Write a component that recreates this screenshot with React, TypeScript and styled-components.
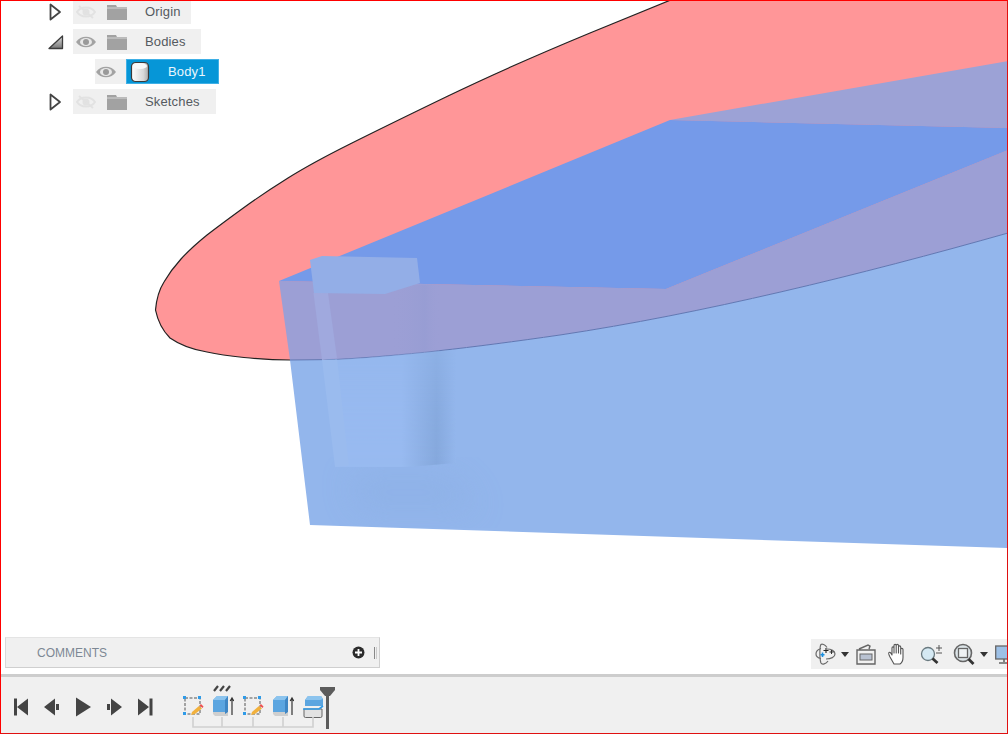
import React from "react";
import styled, { createGlobalStyle } from "styled-components";

const Global = createGlobalStyle`
  html, body { margin: 0; padding: 0; background: #fff; }
  body { font-family: "Liberation Sans", Arial, sans-serif; overflow: hidden; }
`;

const Frame = styled.div`
  width: 1008px; height: 734px; box-sizing: border-box;
  border: 1px solid #f00; border-bottom-color: #e01010; border-right-color: #e01010;
  display: flex; flex-direction: column; overflow: hidden; background: #fff;
`;
const Canvas = styled.div`position: relative; flex: 1; min-height: 0;`;
const Scene = styled.svg`position: absolute; left: -1px; top: -1px; width: 1008px; height: 734px;`;

const Browser = styled.div`
  position: absolute; left: 46px; top: -2px;
  display: flex; flex-direction: column; gap: 5px;
`;
const Row = styled.div<{ $indent?: number }>`
  display: flex; align-items: center; height: 25px;
  margin-left: ${p => p.$indent ?? 0}px;
`;
const Expander = styled.svg`width: 18px; height: 18px; margin-right: 8px; flex: none;`;
const Pill = styled.div<{ $w: number }>`
  width: ${p => p.$w}px; height: 25px; background: #f0f0f0;
  display: flex; align-items: center; padding-left: 2px; box-sizing: border-box;
`;
const EyeBox = styled.svg`width: 22px; height: 16px; margin-right: 9px; flex: none;`;
const FolderIcon = styled.svg`width: 22px; height: 16px; margin-right: 17px; flex: none;`;
const Label = styled.span`font-size: 13px; color: #555a60; letter-spacing: .15px;`;
const EyeCell = styled.div`
  width: 31px; height: 25px; background: #f0f0f0; display: flex; align-items: center; justify-content: center;
`;
const Selected = styled.div`
  width: 93px; height: 25px; background: #0696d7; border: 1px solid #3fb0e6; display: flex; align-items: center; box-sizing: border-box; padding-left: 3px;
`;
const BodyIcon = styled.svg`width: 20px; height: 22px; margin-right: 18px; flex: none;`;
const SelectedLabel = styled.span`font-size: 13px; color: #eaf6fd; letter-spacing: .15px;`;

const BottomBars = styled.div`
  position: absolute; left: 4px; right: 0; bottom: 6px;
  display: flex; justify-content: space-between; align-items: flex-end;
`;
const Comments = styled.div`
  width: 375px; height: 31px; box-sizing: border-box; background: #f0f0f0;
  border: 1px solid #cfcfcf; border-top-color: #e4e4e4; border-left-color: #d8d8d8;
  display: flex; align-items: center; padding-left: 31px; padding-right: 2px;
`;
const CommentsLabel = styled.span`flex: 1; font-size: 12px; color: #7d8894;`;
const AddDot = styled.svg`width: 13px; height: 13px; margin-right: 9px;`;
const Grip = styled.div`width: 3px; height: 12px; border-left: 1px solid #888; border-right: 1px solid #ccc; box-sizing: border-box;`;

const NavBar = styled.div`
  width: 196px; height: 30px; background: #f0f0f0; margin-bottom: -1px;
  display: flex; align-items: center; padding-left: 4px; box-sizing: border-box; overflow: hidden;
`;
const NavIcon = styled.svg<{ $w: number; $mr: number }>`
  width: ${p => p.$w}px; height: 24px; margin-right: ${p => p.$mr}px; flex: none;
`;

const Timeline = styled.div`
  height: 59px; flex: none; box-sizing: border-box; background: #f0f0f0;
  border-top: 3px solid #cdcdcd;
  display: flex; align-items: flex-start;
`;
const Transport = styled.div`
  display: flex; gap: 11px; padding: 20px 0 0 10px; width: 181px; box-sizing: border-box; flex: none;
`;
const TransportIcon = styled.svg`width: 20px; height: 20px; flex: none; fill: #444;`;
const Features = styled.div`
  position: relative; display: flex; gap: 8px; padding-top: 7px; height: 55px; box-sizing: border-box;
`;
const Feature = styled.svg`width: 22px; height: 34px; flex: none;`;
const Bracket = styled.svg`position: absolute; left: 1px; top: 40px; width: 142px; height: 12px;`;
const Marker = styled.svg`width: 17px; height: 42px; margin: 10px 0 0 -5px; flex: none;`;

const Eye = ({ off }: { off?: boolean }) => (
  <EyeBox viewBox="0 0 22 16">
    {off ? (
      <g stroke="#e2e2e2" fill="none" strokeWidth="2">
        <path d="M2 8c4-6 14-6 18 0c-4 6-14 6-18 0z" />
        <circle cx="11" cy="8" r="2.500" fill="#e2e2e2" />
        <path d="M4 2l14 12" stroke="#e2e2e2" />
      </g>
    ) : (
      <g>
        <path d="M1 8c4.500-7 15.500-7 20 0c-4.500 7-15.500 7-20 0z" fill="#a3a3a3" />
        <ellipse cx="11" cy="8" rx="6" ry="4" fill="#e8e8e8" />
        <circle cx="11" cy="8" r="3" fill="#9a9a9a" />
      </g>
    )}
  </EyeBox>
);
const Folder = () => (
  <FolderIcon viewBox="0 0 22 16">
    <path d="M1 1h9l1 2h10v13H1z" fill="#a2a2a2" />
    <path d="M1 4h20" stroke="#d5d5d5" strokeWidth="1" />
  </FolderIcon>
);
const Closed = () => (
  <Expander viewBox="0 0 18 18">
    <path d="M3.500 1.500v15l9.500-7.500z" fill="#fff" stroke="#444" strokeWidth="1.800" strokeLinejoin="round" />
  </Expander>
);
const Open = () => (
  <Expander viewBox="0 0 18 18">
    <defs><linearGradient id="op" x1="0" y1="0" x2="0" y2="1"><stop offset="0" stopColor="#ddd" /><stop offset="1" stopColor="#777" /></linearGradient></defs>
    <path d="M2 15.500L15.500 3v12.500z" fill="url(#op)" stroke="#3d3d3d" strokeWidth="1.300" strokeLinejoin="round" />
  </Expander>
);

const SketchFeature = () => (
  <Feature viewBox="0 0 22 34">
    <g transform="translate(0 4)">
      <rect x="3" y="10" width="15" height="16" fill="none" stroke="#555" strokeWidth="1" strokeDasharray="3 1.500" />
      <rect x="1" y="8" width="3" height="3" fill="#2f9be8" /><rect x="16" y="8" width="3" height="3" fill="#2f9be8" />
      <rect x="1" y="24" width="3" height="3" fill="#2f9be8" />
      <path d="M10 24l7-6 3 2.500-7 5.500-4 1z" fill="#f2b13d" /><path d="M17.500 17.500l3 2.500 1-1.500-2.500-2.500z" fill="#ef4f4f" />
    </g>
  </Feature>
);
const ExtrudeFeature = ({ ticks }: { ticks?: boolean }) => (
  <Feature viewBox="0 0 22 34">
    {ticks && <path d="M2 7l4-5M8 7l4-5M14 7l4-5" stroke="#444" strokeWidth="2.200" />}
    <g transform="translate(0 4)">
      <path d="M1 24h15v4H3l-2-2z" fill="#cfcfcf" />
      <path d="M1 12l4-4h11v16H1z" fill="#5ba5e0" />
      <path d="M1 12l4-4h11l-3 4z" fill="#8cc4ee" />
      <path d="M13 12l3-4v16l-3 2z" fill="#3f86c4" />
      <path d="M20 27V11M18.200 13l1.800-3 1.800 3" stroke="#333" strokeWidth="1.200" fill="none" />
    </g>
  </Feature>
);
const CombineFeature = () => (
  <Feature viewBox="0 0 22 34">
    <g transform="translate(0 3)">
      <path d="M2 22h18v7a1.500 1.500 0 0 1-1.500 1.500H3.500A1.500 1.500 0 0 1 2 29z" fill="#e2e2e2" stroke="#666" strokeWidth="1" />
      <path d="M3 19v-6l3-4h13l2 3v7z" fill="#5ba5e0" />
      <path d="M3 13l3-4h13l2 3-3 1z" fill="#8cc4ee" />
      <path d="M1 22h16l4-3" stroke="#2f9be8" strokeWidth="1.600" fill="none" />
    </g>
  </Feature>
);

const OUTLINE = "M678 -3L590 33Q508 67 448 96Q388 125 350 144Q312 163 288 178Q264 193 244 207.500Q224 222 207 235Q191 248 181 259Q171 270 164 282Q157 293 155.500 310C158 322 162 330 170 338C180 345 195 350 207 352C225 356 260 360 290 360";
const LOWER = "L336 359.500C400 356 470 348 560 335C700 314 860 275 1008 233";

export default function App() {
  return (
    <Frame>
      <Global />
      <Canvas>
        <Scene viewBox="0 0 1008 734">
          <defs>
            <filter id="soft2" x="-50%" y="-50%" width="200%" height="200%"><feGaussianBlur stdDeviation="16" /></filter>
            <clipPath id="bodyClip"><path d={`M290 360${LOWER}V548L310 525Z`} /></clipPath>
            <clipPath id="purpleClip"><path d={`M279 281L666 289L1008 150V233C860 275 700 314 560 335C470 348 400 356 336 359.500L290 360Z`} /></clipPath>
            <linearGradient id="boxFace" x1="335" y1="0" x2="456" y2="0" gradientUnits="userSpaceOnUse">
              <stop offset="0" stopColor="#98baf0" />
              <stop offset=".55" stopColor="#98baf0" />
              <stop offset=".84" stopColor="#85a8dc" />
              <stop offset="1" stopColor="#93b6ec" />
            </linearGradient>
            <linearGradient id="boxFade" x1="0" y1="350" x2="0" y2="468" gradientUnits="userSpaceOnUse">
              <stop offset="0" stopColor="#fff" stopOpacity=".45" />
              <stop offset=".5" stopColor="#fff" stopOpacity=".85" />
              <stop offset="1" stopColor="#fff" stopOpacity="1" />
            </linearGradient>
            <mask id="fadeMask"><rect x="300" y="350" width="160" height="120" fill="url(#boxFade)" /></mask>
            <linearGradient id="purpleShade" x1="390" y1="0" x2="440" y2="0" gradientUnits="userSpaceOnUse">
              <stop offset="0" stopColor="#9c9fd5" stopOpacity="0" />
              <stop offset=".7" stopColor="#939bd2" stopOpacity=".5" />
              <stop offset="1" stopColor="#9c9fd5" stopOpacity="0" />
            </linearGradient>
          </defs>
          <path d={`${OUTLINE}${LOWER}V0H678Z`} fill="#ff9698" />
          <path d={OUTLINE} fill="none" stroke="#222" strokeWidth="1.200" />
          <path d={`M290 360${LOWER}V548L310 525Z`} fill="#93b6ec" />
          <path d="M279 281L666 289L1008 150V233C860 275 700 314 560 335C470 348 400 356 336 359.500L290 360Z" fill="#9c9fd5" />
          <path d="M670 120L1008 61V128Z" fill="#9ca2d6" />
          <path d="M279 281L670 120L1008 128V150L666 289Z" fill="#759ae9" />
          <path d={`M290 360${LOWER}`} fill="none" stroke="#5f78b4" strokeWidth="1" />

          <g clipPath="url(#bodyClip)">
            <path d="M350 475L450 475L480 510L360 510Z" fill="#88abe0" opacity=".35" filter="url(#soft2)" />
            <path d="M335 355L456 350L456 463L408 467L335 467Z" fill="url(#boxFace)" mask="url(#fadeMask)" />
            <path d="M322 360L337 358L349 466L335 467Z" fill="#9abbee" />
          </g>
          <g clipPath="url(#purpleClip)">
            <rect x="390" y="285" width="50" height="80" fill="url(#purpleShade)" />
          </g>
          <path d="M313.500 293L328 293L337 358L322 360Z" fill="#a0a9de" />
          <path d="M310 260L322 256L417 258L420 283L385 294L314 293Z" fill="#93aee7" />
        </Scene>

        <Browser>
          <Row>
            <Closed />
            <Pill $w={118}><Eye off /><Folder /><Label>Origin</Label></Pill>
          </Row>
          <Row>
            <Open />
            <Pill $w={128}><Eye /><Folder /><Label>Bodies</Label></Pill>
          </Row>
          <Row $indent={48}>
            <EyeCell><Eye /></EyeCell>
            <Selected>
              <BodyIcon viewBox="0 0 20 22">
                <defs><linearGradient id="cyl" x1="0" y1="0" x2="1" y2="0"><stop offset="0" stopColor="#fff" /><stop offset=".7" stopColor="#d8d8d8" /><stop offset="1" stopColor="#aaa" /></linearGradient></defs>
                <rect x="1.500" y="1.500" width="17" height="19" rx="4" fill="url(#cyl)" stroke="#3a3a3a" strokeWidth="1.200" />
                <ellipse cx="10" cy="5" rx="7" ry="3" fill="#f8f8f8" />
              </BodyIcon>
              <SelectedLabel>Body1</SelectedLabel>
            </Selected>
          </Row>
          <Row>
            <Closed />
            <Pill $w={143}><Eye off /><Folder /><Label>Sketches</Label></Pill>
          </Row>
        </Browser>

        <BottomBars>
          <Comments>
            <CommentsLabel>COMMENTS</CommentsLabel>
            <AddDot viewBox="0 0 13 13">
              <circle cx="6.500" cy="6.500" r="6" fill="#2b2b2b" />
              <path d="M6.500 3v7M3 6.500h7" stroke="#fff" strokeWidth="1.800" />
            </AddDot>
            <Grip />
          </Comments>
          <NavBar>
            <NavIcon $w={22} $mr={4} viewBox="0 0 22 24">
              <g fill="none" stroke="#6a6a6a" strokeWidth="1.200">
                <path d="M6 6.500C2.500 7.500 1 10 1 12c0 2 2 4 5 4.500M12 5.500c-2-3-5-4-6-3-1.500 1.500-1.500 15 0 18.500 1 2 5 1 7-2" />
                <path d="M12 7c4 0 8 2 8 5s-4 5-9 5" />
              </g>
              <path d="M11 6v5M8.500 8.500h5" stroke="#222" strokeWidth="1.100" />
              <path d="M16.500 8v4M14.500 10h4" stroke="#333" strokeWidth="1" />
              <path d="M7.500 10.500v4.500M5.500 12.800h4" stroke="#1b8fe0" strokeWidth="1.600" />
            </NavIcon>
            <NavIcon $w={8} $mr={7} viewBox="0 0 8 24"><path d="M0 10h8l-4 5z" fill="#333" /></NavIcon>
            <NavIcon $w={20} $mr={12} viewBox="0 0 20 24">
              <path d="M3 7l9-4 2 1-1 3M1 8h18v14H1z" fill="#f1f1f1" stroke="#666" strokeWidth="1.400" />
              <rect x="4" y="12" width="12" height="6" fill="#b9c2d2" stroke="#666" />
            </NavIcon>
            <NavIcon $w={20} $mr={12} viewBox="0 0 20 24">
              <path d="M6 22L2 15c-1-2-2-4-1-4.500 1-.7 2 .5 3 2.500V6c0-1.500 2-1.500 2 0v5V3.500c0-1.500 2.200-1.500 2.200 0V11V3.500c0-1.500 2.300-1.500 2.300 0V11V5c0-1.500 2.200-1.500 2.200 0v7V7.500c0-1.500 2.300-1.500 2.300 0v8c0 3-1.500 5.500-3 6.500z" fill="#fff" stroke="#555" strokeWidth="1.100" strokeLinejoin="round" />
            </NavIcon>
            <NavIcon $w={22} $mr={11} viewBox="0 0 22 24">
              <circle cx="8" cy="12" r="6.500" fill="#d5e9f3" stroke="#6a7a80" strokeWidth="1.300" />
              <path d="M12.500 16.500l5 4.500" stroke="#333" strokeWidth="2.800" />
              <path d="M16 6h6M19 3v6M16 11h6" stroke="#555" strokeWidth="1" />
            </NavIcon>
            <NavIcon $w={22} $mr={5} viewBox="0 0 22 24">
              <circle cx="10" cy="11" r="8.500" fill="#dce4e8" stroke="#666" strokeWidth="1.600" />
              <rect x="5.500" y="6.500" width="9" height="9" fill="#eef2f4" stroke="#666" strokeWidth="1.300" />
              <path d="M15.500 17l5 5" stroke="#333" strokeWidth="2.800" />
            </NavIcon>
            <NavIcon $w={8} $mr={7} viewBox="0 0 8 24"><path d="M0 10h8l-4 5z" fill="#333" /></NavIcon>
            <NavIcon $w={18} $mr={0} viewBox="0 0 18 24">
              <rect x="0.700" y="4" width="16.600" height="13" fill="#9dc0e6" stroke="#666" strokeWidth="1.300" />
              <path d="M9 17v3M4 21h10" stroke="#666" strokeWidth="1.600" />
            </NavIcon>
          </NavBar>
        </BottomBars>
      </Canvas>

      <Timeline>
        <Transport>
          <TransportIcon viewBox="0 0 20 20"><path d="M3 1.500h3v17H3zM17 1.500v17L6 10z" /></TransportIcon>
          <TransportIcon viewBox="0 0 20 20"><path d="M13 1.500v17L2 10zM14 7h3v6h-3z" /></TransportIcon>
          <TransportIcon viewBox="0 0 20 20"><path d="M3 0.500L18 10 3 19.500z" /></TransportIcon>
          <TransportIcon viewBox="0 0 20 20"><path d="M7 1.500v17L18 10zM3 7h3v6H3z" /></TransportIcon>
          <TransportIcon viewBox="0 0 20 20"><path d="M3 1.500v17L14 10zM14.500 1.500h3v17h-3z" /></TransportIcon>
        </Transport>
        <Features>
          <SketchFeature />
          <ExtrudeFeature ticks />
          <SketchFeature />
          <ExtrudeFeature />
          <CombineFeature />
          <Bracket viewBox="0 0 142 12">
            <path d="M10 0v10h120V0M39 0v10M70 0v10M100 0v10" fill="none" stroke="#d0d0d0" strokeWidth="1.600" />
          </Bracket>
        </Features>
        <Marker viewBox="0 0 17 42">
          <path d="M1 0h15v3l-5 6H6L1 3z" fill="#5c5c5c" />
          <rect x="7" y="6" width="3" height="36" fill="#5c5c5c" />
        </Marker>
      </Timeline>
    </Frame>
  );
}
